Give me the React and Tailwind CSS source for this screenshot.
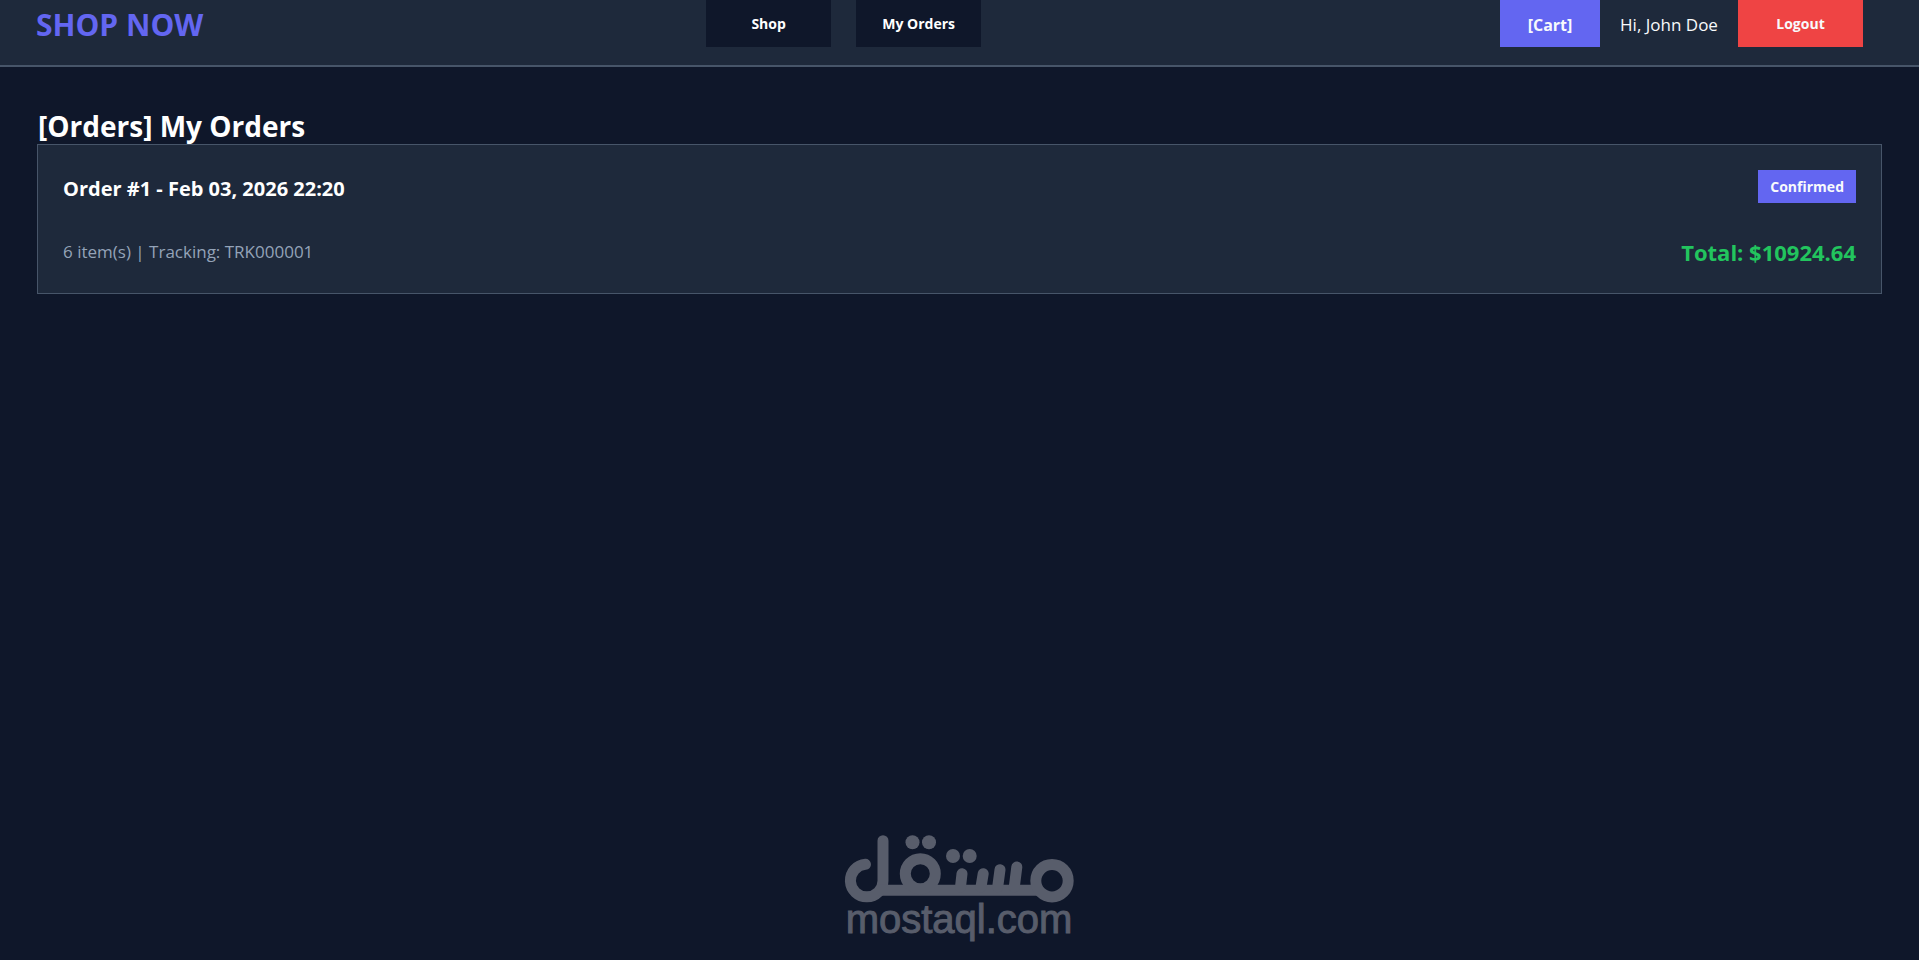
const orders = [
  {
    id: 1,
    date: 'Feb 03, 2026 22:20',
    status: 'Confirmed',
    items: 6,
    tracking: 'TRK000001',
    total: 10924.64,
  },
];

const NavButton = ({ children }) => (
  <button className="h-[47px] w-[125px] bg-[#0f172a] pt-px text-sm font-bold text-white">
    {children}
  </button>
);

const Header = ({ user }) => (
  <header className="grid grid-cols-[auto_1fr_auto] items-start border-b-2 border-[#475569] bg-[#1e293b] pr-14 pb-[18px] pl-9">
    <a
      href="#"
      className="flex h-[47px] items-center pt-0.5 text-[30px] font-bold text-[#6366f1]"
    >
      SHOP NOW
    </a>

    <nav className="flex justify-center gap-[25px] pr-4">
      <NavButton>Shop</NavButton>
      <NavButton>My Orders</NavButton>
    </nav>

    <div className="flex items-center">
      <button className="h-[47px] w-[100px] bg-[#6366f1] pt-0.5 text-base font-bold text-[#f8fafc]">
        [Cart]
      </button>
      <span className="min-w-[138px] pt-0.5 text-center text-[17px] text-[#f8fafc]">
        Hi, {user}
      </span>
      <button className="h-[47px] w-[125px] bg-[#ef4444] pt-px text-sm font-bold text-[#f8fafc]">
        Logout
      </button>
    </div>
  </header>
);

const OrderCard = ({ order }) => (
  <article className="border border-[#475569] bg-[#1e293b] p-[25px]">
    <div className="flex items-start justify-between">
      <h2 className="text-xl leading-[38px] font-bold text-white">
        Order #{order.id} - {order.date}
      </h2>
      <span className="bg-[#6366f1] px-3 text-sm leading-[33px] font-bold text-[#f8fafc]">
        {order.status}
      </span>
    </div>
    <div className="mt-7 flex items-center justify-between">
      <p className="text-[17px] leading-8 text-[#94a3b8]">
        {order.items} item(s) | Tracking: {order.tracking}
      </p>
      <p className="text-[22px] leading-8 font-bold text-[#22c55e]">
        Total: ${order.total.toFixed(2)}
      </p>
    </div>
  </article>
);

const MostaqlMark = () => (
  <svg
    viewBox="0 0 230 68"
    className="h-[68px] w-[230px]"
    fill="none"
    stroke="currentColor"
    strokeWidth="11"
    aria-hidden="true"
  >
    <path
      d="M21.5 29.300A16.300 16.300 0 1 0 39 45.700V5.700"
      strokeLinecap="round"
      strokeLinejoin="round"
    />
    <path d="M34 55.300H197" />
    <circle cx="76.300" cy="38.700" r="15" />
    <circle cx="208" cy="45.700" r="16.200" />
    <path
      d="M116.500 52L118 38.700M137 52L139.200 38.700M153.700 52L156 34.700M170.300 52L172.800 32"
      strokeLinecap="round"
    />
    <g fill="currentColor" stroke="none">
      <circle cx="68.500" cy="7.300" r="7" />
      <circle cx="85" cy="7.300" r="7" />
      <circle cx="109" cy="21" r="7" />
      <circle cx="125.700" cy="21" r="7" />
    </g>
  </svg>
);

const Footer = () => (
  <footer className="flex flex-col items-center pr-px pb-[21px] text-[#585d6b]">
    <MostaqlMark />
    <span className="-mt-1 font-['Liberation_Sans',Arial,sans-serif] text-[40px] leading-10 [-webkit-text-stroke:1px_#585d6b]">
      mostaql.com
    </span>
  </footer>
);

export default function App() {
  return (
    <div className="flex min-h-screen flex-col bg-[#0f172a] font-['Open_Sans','Noto_Sans',sans-serif]">
      <Header user="John Doe" />
      <main className="flex-1 px-[37px] pt-10">
        <h1 className="pt-px pl-px text-[28px] leading-9 font-bold text-white">
          [Orders] My Orders
        </h1>
        {orders.map((order) => (
          <OrderCard key={order.id} order={order} />
        ))}
      </main>
      <Footer />
    </div>
  );
}
